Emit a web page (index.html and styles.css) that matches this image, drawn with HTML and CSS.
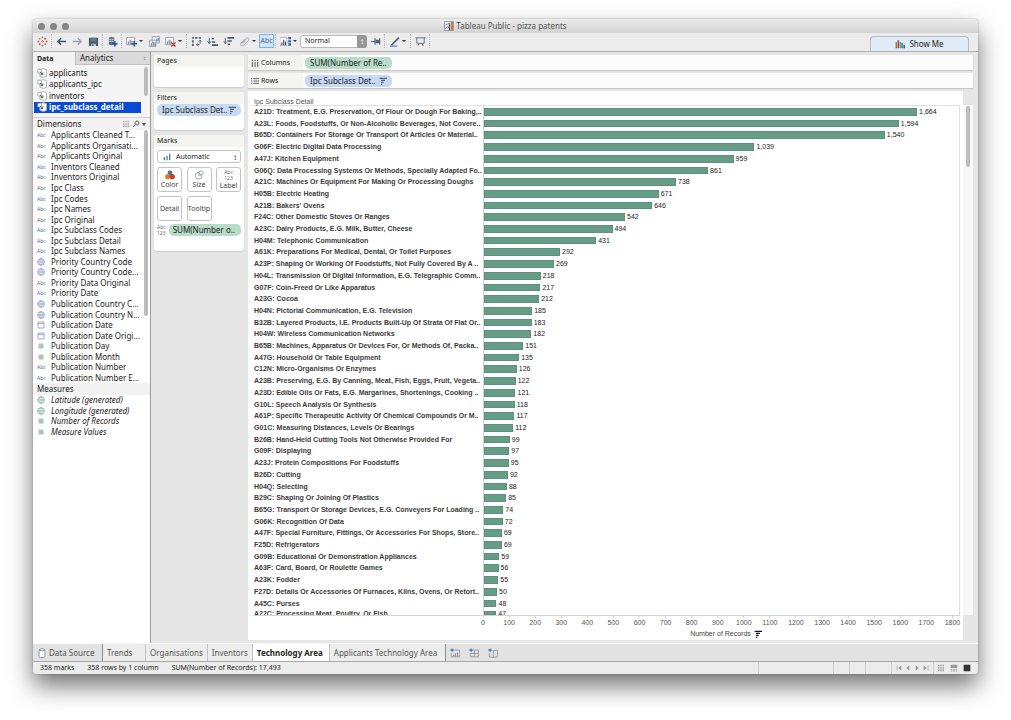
FILE: index.html
```html
<!DOCTYPE html>
<html lang="en">
<head>
    <meta charset="UTF-8">
    <meta name="viewport" content="width=device-width, initial-scale=1.0">
    <title>Tableau Public - pizza patents</title>
    <link rel="stylesheet" href="styles.css">
</head>
<body>
    <svg class="defs" aria-hidden="true">
        <symbol id="i-logo" viewBox="0 0 12 12"><path d="M6 4.500v3M4.500 6h3" stroke="#e8762d"/><path d="M6 .5v2M5 1.500h2M6 9.500v2M5 10.500h2" stroke="#6f8fb0"/><path d="M1.500 5v2M.5 6h2M10.500 5v2M9.500 6h2" stroke="#c9578a"/><path d="M3 2v2M2 3h2M9 8v2M8 9h2" stroke="#e8762d"/><path d="M9 2v2M8 3h2M3 8v2M2 9h2" stroke="#c4453e"/></symbol>
        <symbol id="i-back" viewBox="0 0 12 12"><path d="M11 6H2M5.500 2.500L2 6l3.500 3.500" fill="none" stroke="#44566c" stroke-width="1.600"/></symbol>
        <symbol id="i-fwd" viewBox="0 0 12 12"><path d="M1 6h9M6.500 2.500L10 6l-3.500 3.500" fill="none" stroke="#9aa3ac" stroke-width="1.500"/></symbol>
        <symbol id="i-save" viewBox="0 0 12 12"><path d="M1 2h10v9H1z" fill="#4a5b6e"/><path d="M3 2h6v4H3z" fill="#66788c"/><path d="M3.500 8.500h5V11h-5z" fill="#cfd5db"/><path d="M4.500 9H6v2H4.500z" fill="#4a5b6e"/></symbol>
        <symbol id="i-data" viewBox="0 0 12 12"><path d="M2 2q3-2 6 0v7q-3 2-6 0z" fill="#5b6b7c"/><path d="M2 3.500q3 1.500 6 0M2 5.500q3 1.500 6 0" fill="none" stroke="#e5e8eb" stroke-width=".8"/><path d="M8.500 5.500v6M5.500 8.500h6" stroke="#2f57a3" stroke-width="2"/></symbol>
        <symbol id="i-sheet" viewBox="0 0 12 12"><path d="M.5 1.500h9v8h-9z" fill="#f8f8f8" stroke="#9ba3ab"/><path d="M2.500 9V6M4.500 9V4M6.500 9V5" stroke="#55677b"/><path d="M9 5.500v6M6 8.500h6" stroke="#2f57a3" stroke-width="1.800"/></symbol>
        <symbol id="i-dup" viewBox="0 0 12 12"><path d="M3.500.5h8v7h-8zM.5 4.500h7v7h-7z" fill="#f6f6f6" stroke="#98a1aa"/><path d="M2.500 11V8M4.500 11V6.500M6.500 11V8M8.500 6V3M10 6V2" stroke="#55677b"/></symbol>
        <symbol id="i-clear" viewBox="0 0 12 12"><path d="M.5 1.500h9v8h-9z" fill="#f8f8f8" stroke="#9ba3ab"/><path d="M2.500 9V6M4.500 9V4M6.500 9V5" stroke="#55677b"/><path d="M7 7l4.500 4.500M11.500 7L7 11.500" stroke="#c3362b" stroke-width="1.400"/></symbol>
        <symbol id="i-swap" viewBox="0 0 12 12"><path d="M1 1h2v2H1zM1 4.500h2V7H1zM1 8.500h2V11H1zM4.500 1H7v2H4.500zM8.500 1H11v2H8.500z" fill="#52637a"/><path d="M10 5v3q0 1.500-4 1.500M8.500 6L10 4.500 11.500 6M7.500 8L6 9.500 7.500 11" fill="none" stroke="#52637a"/></symbol>
        <symbol id="i-asc" viewBox="0 0 12 12"><path d="M2.500 2v6M.8 6l1.700 2.300L4.200 6" fill="none" stroke="#44566c"/><path d="M5.500 3h2M5.500 6.500H9M5.500 10H12" stroke="#44566c" stroke-width="1.800"/></symbol>
        <symbol id="i-desc" viewBox="0 0 12 12"><path d="M2.500 2v6M.8 6l1.700 2.300L4.200 6" fill="none" stroke="#44566c"/><path d="M5 2h7M5 5.500h4.500M5 9h2.500" stroke="#44566c" stroke-width="1.800"/></symbol>
        <symbol id="i-clip" viewBox="0 0 12 12"><path d="M3 8l5-5.500q1.500-1 2.500 0t0 2.500L5 10.500q-2 1-3-.3t0-2.500L7 3M4 8.500l4-4" fill="none" stroke="#a3a8ad"/></symbol>
        <symbol id="i-cards" viewBox="0 0 12 12"><path d="M0 1.500h7.500v9H0z" fill="#fff" stroke="#9ba3ab" stroke-width=".8"/><path d="M2 10V7M4 10V4M6 10V6" stroke="#44566c" stroke-width="1.300"/><path d="M9 1h3v2.500H9zM9 4.500h3V7H9zM9 8h3v2.500H9z" fill="#3f62a0"/></symbol>
        <symbol id="i-pin" viewBox="0 0 12 12"><path d="M1 6h4M5.500 2.500v7M10.500 2.500v7" stroke="#52637a" stroke-width="1.300"/><path d="M6 4h4v4H6z" fill="#52637a"/></symbol>
        <symbol id="i-pen" viewBox="0 0 12 12"><path d="M10 1.500L3.500 8.500 2 10l2-.5 7-7z" fill="#44566c" stroke="#44566c" stroke-width=".8"/><path d="M1 11h8" stroke="#5a86bd" stroke-width="1.400"/></symbol>
        <symbol id="i-present" viewBox="0 0 12 12"><path d="M.5 2h11M2 2v6h8V2M4.500 8L3 11M7.500 8L9 11" fill="none" stroke="#5c6a79"/></symbol>
        <symbol id="i-showme" viewBox="0 0 12 12"><path d="M1.500 11V4" stroke="#8a6d2c" stroke-width="1.500"/><path d="M4 11V1.500" stroke="#b33434" stroke-width="1.800"/><path d="M6.500 11V3.500" stroke="#7b7bb0" stroke-width="1.500"/><path d="M8.500 11V4.500" stroke="#19a319" stroke-width="1.700"/><path d="M11 11V7" stroke="#2a3fd0" stroke-width="1.700"/></symbol>
        <symbol id="i-app" viewBox="0 0 12 12"><path d="M.5.5h11v11H.5z" fill="#e3e6ee" stroke="#8a93a5"/><path d="M2 9l2-2 2 1M2 4h2M5 3h2" stroke="#4f6b9e" fill="none"/><path d="M8 1h3v10H8z" fill="#c77c31"/><path d="M6.500 4v7" stroke="#454b58" stroke-width="1.500"/></symbol>
        <symbol id="i-src" viewBox="0 0 12 12"><path d="M3.500 2q4-2.500 8 0v8q-4 2.500-8 0z" fill="#fff" stroke="#a2a8ae"/><path d="M1 1.500h4.500V6H1z" fill="#fff" stroke="#8e959c" stroke-width=".8"/><path d="M3.500 4.500L7 8M7 5.500V8H4.500" fill="none" stroke="#4e565e" stroke-width="1.200"/></symbol>
        <symbol id="i-globe" viewBox="0 0 12 12"><circle cx="6" cy="6" r="5" fill="none" stroke="currentColor"/><path d="M1 6h10M6 1v10" stroke="currentColor" stroke-width=".8"/><ellipse cx="6" cy="6" rx="2.600" ry="5" fill="none" stroke="currentColor" stroke-width=".5"/></symbol>
        <symbol id="i-cal" viewBox="0 0 12 12"><path d="M1.500 1.500h9v9h-9zM1.500 4h9" fill="none" stroke="currentColor"/></symbol>
        <symbol id="i-hash" viewBox="0 0 12 12"><path d="M4.500 1.500v9M7.500 1.500v9M1.500 4.500h9M1.500 7.500h9" stroke="currentColor"/></symbol>
        <symbol id="i-sort" viewBox="0 0 12 12"><path d="M1 2h11M3 5h6M3 8h4M3 11h2" stroke="currentColor" stroke-width="1.700"/></symbol>
        <symbol id="i-grid" viewBox="0 0 12 12"><path d="M2.500 1v10M6 1v10M9.500 1v10" stroke="currentColor" stroke-width="2.200" stroke-dasharray="2.500 1.200"/></symbol>
        <symbol id="i-find" viewBox="0 0 12 12"><path d="M7.500 1.500a3 3 0 1 0 .01 0zM5 6.500L1.500 10.500" fill="none" stroke="#555" stroke-width="1.400"/></symbol>
        <symbol id="i-rows" viewBox="0 0 12 12"><path d="M0 2.500h2M0 6h2M0 9.500h2M3.500 2.500H12M3.500 6H12M3.500 9.500H12" stroke="#5c6878" stroke-width="1.500"/></symbol>
        <symbol id="i-cols" viewBox="0 0 12 12"><path d="M2 1v2M6 1v2M10 1v2M2 4v8M6 4v8M10 4v8" stroke="#777f88" stroke-width="2"/></symbol>
        <symbol id="i-bars" viewBox="0 0 12 12"><path d="M2 11V6M6 11V4M10 11V1" stroke="#4677a8" stroke-width="2"/></symbol>
        <symbol id="i-color" viewBox="0 0 12 12"><circle cx="6" cy="3.500" r="2.900" fill="#3f78ab"/><circle cx="3.300" cy="8" r="3.100" fill="#e8762d"/><circle cx="8.700" cy="8" r="3.100" fill="#c33d26"/></symbol>
        <symbol id="i-size" viewBox="0 0 12 12"><circle cx="5.500" cy="7" r="4" fill="none" stroke="#8b959f"/><circle cx="8.500" cy="3.500" r="2.500" fill="#fff" stroke="#8b959f"/><circle cx="6.500" cy="5.500" r="1.300" fill="none" stroke="#8b959f" stroke-width=".8"/></symbol>
        <symbol id="i-db" viewBox="0 0 12 12"><path d="M2.500 2.500q0-1.500 3.500-1.500t3.500 1.500v8q0 1-3.500 1t-3.500-1z" fill="#fff" stroke="#7d8896"/><path d="M2.500 2.500q3.500 2 7 0" fill="none" stroke="#7d8896"/></symbol>
        <symbol id="i-newsheet" viewBox="0 0 12 12"><path d="M5 2.500h6.500v8h-10V6" fill="none" stroke="#8a95a1"/><path d="M4.500 10V8M6.500 10V6.500M9 10V5.500" stroke="#667587"/><path d="M2.500.5v4M.5 2.500h4" stroke="#2f6fc0" stroke-width="1.300"/></symbol>
        <symbol id="i-newdash" viewBox="0 0 12 12"><path d="M5 2.500h6.500v8h-10V6M2 6.500h9M6.500 3v7" fill="none" stroke="#8a95a1"/><path d="M2.500.5v4M.5 2.500h4" stroke="#2f6fc0" stroke-width="1.300"/></symbol>
        <symbol id="i-newstory" viewBox="0 0 12 12"><path d="M5 2.500l1.500 1 5-1v8l-5 1-5-1V6M6.500 4v7" fill="none" stroke="#8a95a1"/><path d="M2.500.5v4M.5 2.500h4" stroke="#2f6fc0" stroke-width="1.300"/></symbol>
        <symbol id="i-prev" viewBox="0 0 12 12"><path d="M8 2v8L3.500 6z" fill="#999"/></symbol>
        <symbol id="i-next" viewBox="0 0 12 12"><path d="M4 2v8l4.500-4z" fill="#999"/></symbol>
        <symbol id="i-first" viewBox="0 0 12 12"><path d="M9.500 2v8L5 6z" fill="#999"/><path d="M3 2v8" stroke="#999"/></symbol>
        <symbol id="i-last" viewBox="0 0 12 12"><path d="M2.500 2v8L7 6z" fill="#999"/><path d="M9 2v8" stroke="#999"/></symbol>
        <symbol id="i-film" viewBox="0 0 12 12"><path d="M1 1h10v5H1z" fill="#999"/><path d="M1 8h10M1 10.500h10" stroke="#999" stroke-width="1.500" stroke-dasharray="2.500 1.200"/></symbol>
        <symbol id="i-full" viewBox="0 0 12 12"><path d="M1 1h10v10H1z" fill="#333"/></symbol>
    </svg>

    <div class="window">
        <header class="titlebar">
            <div class="lights"><i></i><i></i><i></i></div>
            <h1><svg class="icon"><use href="#i-app"/></svg>Tableau Public - pizza patents</h1>
            <div class="lights-space"></div>
        </header>

        <div class="toolbar">
            <button class="tool" aria-label="Start page"><svg class="icon"><use href="#i-logo"/></svg></button>
            <span class="sep"></span>
            <button class="tool" aria-label="Undo"><svg class="icon"><use href="#i-back"/></svg></button>
            <button class="tool" aria-label="Redo"><svg class="icon"><use href="#i-fwd"/></svg></button>
            <button class="tool" aria-label="Save"><svg class="icon"><use href="#i-save"/></svg></button>
            <span class="sep"></span>
            <button class="tool" aria-label="New data source"><svg class="icon"><use href="#i-data"/></svg></button>
            <span class="sep"></span>
            <button class="tool drop" aria-label="New worksheet"><svg class="icon"><use href="#i-sheet"/></svg></button>
            <button class="tool" aria-label="Duplicate"><svg class="icon"><use href="#i-dup"/></svg></button>
            <button class="tool drop" aria-label="Clear sheet"><svg class="icon"><use href="#i-clear"/></svg></button>
            <span class="sep"></span>
            <button class="tool" aria-label="Swap"><svg class="icon"><use href="#i-swap"/></svg></button>
            <button class="tool" aria-label="Sort ascending"><svg class="icon"><use href="#i-asc"/></svg></button>
            <button class="tool" aria-label="Sort descending"><svg class="icon"><use href="#i-desc"/></svg></button>
            <button class="tool drop" aria-label="Group"><svg class="icon"><use href="#i-clip"/></svg></button>
            <button class="tool abc-button">Abc</button>
            <span class="sep"></span>
            <button class="tool drop" aria-label="Show cards"><svg class="icon"><use href="#i-cards"/></svg></button>
            <span class="fit">
                <select aria-label="Fit"><option>Normal</option></select>
            </span>
            <button class="tool" aria-label="Fix axes"><svg class="icon"><use href="#i-pin"/></svg></button>
            <span class="sep"></span>
            <button class="tool drop" aria-label="Highlight"><svg class="icon"><use href="#i-pen"/></svg></button>
            <span class="sep"></span>
            <button class="tool" aria-label="Presentation mode"><svg class="icon"><use href="#i-present"/></svg></button>
            <span class="sep"></span>
            <button class="show-me"><svg class="icon"><use href="#i-showme"/></svg>Show Me</button>
        </div>

        <main class="workspace">
            <aside class="sidebar">
                <div class="side-tabs">
                    <button class="active">Data</button>
                    <button>Analytics <span class="updown">&#8597;</span></button>
                </div>
                <div class="sources">
                    <ul>
                        <li><svg class="icon"><use href="#i-src"/></svg>applicants</li>
                        <li><svg class="icon"><use href="#i-src"/></svg>applicants_ipc</li>
                        <li><svg class="icon"><use href="#i-src"/></svg>inventors</li>
                        <li class="selected"><svg class="icon"><use href="#i-src"/></svg>ipc_subclass_detail</li>
                    </ul>
                    <div class="scroll"></div>
                </div>
                <h2 class="side-head">Dimensions
                    <span class="head-icons">
                        <svg class="icon small"><use href="#i-grid"/></svg>
                        <svg class="icon small"><use href="#i-find"/></svg>
                        <i class="caret"></i>
                    </span>
                </h2>
                <div class="dimensions">
                    <ul class="fields" id="dimensions"></ul>
                    <div class="scroll"></div>
                </div>
                <h2 class="side-head">Measures</h2>
                <ul class="fields measures" id="measures"></ul>
            </aside>

            <section class="cards">
                <div class="card pages">
                    <h3>Pages</h3>
                </div>
                <div class="card filters">
                    <h3>Filters</h3>
                    <button class="pill blue">Ipc Subclass Det.. <svg class="icon small"><use href="#i-sort"/></svg></button>
                </div>
                <div class="card marks">
                    <h3>Marks</h3>
                    <div class="mark-type">
                        <svg class="icon small"><use href="#i-bars"/></svg>
                        <select aria-label="Mark type"><option>Automatic</option></select>
                    </div>
                    <div class="mark-grid">
                        <button><svg class="icon"><use href="#i-color"/></svg>Color</button>
                        <button><svg class="icon"><use href="#i-size"/></svg>Size</button>
                        <button><span class="abc123">Abc<br>123</span>Label</button>
                        <button>Detail</button>
                        <button>Tooltip</button>
                    </div>
                    <div class="mark-pill">
                        <span class="abc123">Abc<br>123</span>
                        <button class="pill green">SUM(Number o..</button>
                    </div>
                </div>
            </section>

            <section class="sheet">
                <div class="shelf">
                    <h3><svg class="icon small"><use href="#i-cols"/></svg>Columns</h3>
                    <button class="pill green">SUM(Number of Re..</button>
                </div>
                <div class="shelf">
                    <h3><svg class="icon small"><use href="#i-rows"/></svg>Rows</h3>
                    <button class="pill blue">Ipc Subclass Det.. <svg class="icon small"><use href="#i-sort"/></svg></button>
                </div>
                <div class="view-row">
                    <div class="view">
                        <div class="view-title">Ipc Subclass Detail</div>
                        <div class="chart" id="chart"></div>
                        <div class="axis" id="axis"></div>
                        <div class="axis-title">Number of Records <svg class="icon small"><use href="#i-sort"/></svg></div>
                    </div>
                    <div class="view-scroll"><div class="scroll"></div></div>
                </div>
            </section>
        </main>

        <nav class="sheet-tabs">
            <button class="source"><svg class="icon"><use href="#i-db"/></svg>Data Source</button>
            <button>Trends</button>
            <button>Organisations</button>
            <button>Inventors</button>
            <button class="active">Technology Area</button>
            <button class="last">Applicants Technology Area</button>
            <button class="new" aria-label="New worksheet"><svg class="icon"><use href="#i-newsheet"/></svg></button>
            <button class="new" aria-label="New dashboard"><svg class="icon"><use href="#i-newdash"/></svg></button>
            <button class="new" aria-label="New story"><svg class="icon"><use href="#i-newstory"/></svg></button>
        </nav>

        <footer class="status">
            <span>358 marks</span>
            <span>358 rows by 1 column</span>
            <span>SUM(Number of Records): 17,493</span>
            <div class="status-cells"><i></i><i></i><i></i><i></i></div>
            <div class="status-nav">
                <svg class="icon small"><use href="#i-first"/></svg>
                <svg class="icon small"><use href="#i-prev"/></svg>
                <svg class="icon small"><use href="#i-next"/></svg>
                <svg class="icon small"><use href="#i-last"/></svg>
            </div>
            <div class="status-view">
                <svg class="icon small"><use href="#i-grid"/></svg>
                <svg class="icon small"><use href="#i-film"/></svg>
                <svg class="icon small"><use href="#i-full"/></svg>
            </div>
        </footer>
    </div>

    <script>
        const dimensions = [
            ['abc', 'Applicants Cleaned T...'],
            ['abc', 'Applicants Organisati...'],
            ['abc', 'Applicants Original'],
            ['abc', 'Inventors Cleaned'],
            ['abc', 'Inventors Original'],
            ['abc', 'Ipc Class'],
            ['abc', 'Ipc Codes'],
            ['abc', 'Ipc Names'],
            ['abc', 'Ipc Original'],
            ['abc', 'Ipc Subclass Codes'],
            ['abc', 'Ipc Subclass Detail'],
            ['abc', 'Ipc Subclass Names'],
            ['globe', 'Priority Country Code'],
            ['globe', 'Priority Country Code...'],
            ['abc', 'Priority Data Original'],
            ['abc', 'Priority Date'],
            ['globe', 'Publication Country C...'],
            ['globe', 'Publication Country N...'],
            ['cal', 'Publication Date'],
            ['cal', 'Publication Date Origi...'],
            ['hash', 'Publication Day'],
            ['hash', 'Publication Month'],
            ['abc', 'Publication Number'],
            ['abc', 'Publication Number E...']
        ];

        const measures = [
            ['globe', 'Latitude (generated)'],
            ['globe', 'Longitude (generated)'],
            ['hash', 'Number of Records'],
            ['hash', 'Measure Values']
        ];

        const records = [
            ['A21D: Treatment, E.G. Preservation, Of Flour Or Dough For Baking,..', 1664],
            ['A23L: Foods, Foodstuffs, Or Non-Alcoholic Beverages, Not Covere..', 1594],
            ['B65D: Containers For Storage Or Transport Of Articles Or Material..', 1540],
            ['G06F: Electric Digital Data Processing', 1039],
            ['A47J: Kitchen Equipment', 959],
            ['G06Q: Data Processing Systems Or Methods, Specially Adapted Fo..', 861],
            ['A21C: Machines Or Equipment For Making Or Processing Doughs', 738],
            ['H05B: Electric Heating', 671],
            ["A21B: Bakers' Ovens", 646],
            ['F24C: Other Domestic Stoves Or Ranges', 542],
            ['A23C: Dairy Products, E.G. Milk, Butter, Cheese', 494],
            ['H04M: Telephonic Communication', 431],
            ['A61K: Preparations For Medical, Dental, Or Toilet Purposes', 292],
            ['A23P: Shaping Or Working Of Foodstuffs, Not Fully Covered By A ..', 269],
            ['H04L: Transmission Of Digital Information, E.G. Telegraphic Comm..', 218],
            ['G07F: Coin-Freed Or Like Apparatus', 217],
            ['A23G: Cocoa', 212],
            ['H04N: Pictorial Communication, E.G. Television', 185],
            ['B32B: Layered Products, I.E. Products Built-Up Of Strata Of Flat Or..', 183],
            ['H04W: Wireless Communication Networks', 182],
            ['B65B: Machines, Apparatus Or Devices For, Or Methods Of, Packa..', 151],
            ['A47G: Household Or Table Equipment', 135],
            ['C12N: Micro-Organisms Or Enzymes', 126],
            ['A23B: Preserving, E.G. By Canning, Meat, Fish, Eggs, Fruit, Vegeta..', 122],
            ['A23D: Edible Oils Or Fats, E.G. Margarines, Shortenings, Cooking ..', 121],
            ['G10L: Speech Analysis Or Synthesis', 118],
            ['A61P: Specific Therapeutic Activity Of Chemical Compounds Or M..', 117],
            ['G01C: Measuring Distances, Levels Or Bearings', 112],
            ['B26B: Hand-Held Cutting Tools Not Otherwise Provided For', 99],
            ['G09F: Displaying', 97],
            ['A23J: Protein Compositions For Foodstuffs', 95],
            ['B26D: Cutting', 92],
            ['H04Q: Selecting', 88],
            ['B29C: Shaping Or Joining Of Plastics', 85],
            ['B65G: Transport Or Storage Devices, E.G. Conveyers For Loading ..', 74],
            ['G06K: Recognition Of Data', 72],
            ['A47F: Special Furniture, Fittings, Or Accessories For Shops, Store..', 69],
            ['F25D: Refrigerators', 69],
            ['G09B: Educational Or Demonstration Appliances', 59],
            ['A63F: Card, Board, Or Roulette Games', 56],
            ['A23K: Fodder', 55],
            ['F27D: Details Or Accessories Of Furnaces, Kilns, Ovens, Or Retort..', 50],
            ['A45C: Purses', 48],
            ['A22C: Processing Meat, Poultry, Or Fish', 47]
        ];

        const axisMax = 1825;

        function renderFields(id, fields) {
            document.getElementById(id).innerHTML = fields.map(([type, name]) => {
                const icon = type === 'abc'
                    ? '<span class="abc">Abc</span>'
                    : `<svg class="icon small ${type}"><use href="#i-${type}"/></svg>`;
                return `<li>${icon}${name}</li>`;
            }).join('');
        }

        renderFields('dimensions', dimensions);
        renderFields('measures', measures);

        document.getElementById('chart').innerHTML = records.map(([name, count]) => `
            <div class="row">
                <span class="name">${name}</span>
                <span class="plot">
                    <span class="bar" style="width: ${(count / axisMax * 100).toFixed(2)}%"></span>
                    <span class="value">${count.toLocaleString('en-US')}</span>
                </span>
            </div>`).join('');

        let ticks = '';
        for (let n = 0; n <= 1800; n += 100) {
            ticks += `<span>${n}</span>`;
        }
        document.getElementById('axis').innerHTML = ticks;
    </script>
</body>
</html>
```
FILE: styles.css
```css
* {
    box-sizing: border-box;
}
body {
    margin: 0;
    height: 100vh;
    padding: 19px 33px 46px;
    background: #ffffff;
    font-family: "Lucida Grande", "Noto Sans", sans-serif;
    font-size: 8px;
    line-height: 10px;
    color: #222222;
}
h1, h2, h3, ul {
    margin: 0;
    padding: 0;
    font-size: 8px;
    font-weight: normal;
    list-style: none;
}
button, select {
    font: inherit;
    color: inherit;
    margin: 0;
    padding: 0;
    border: none;
    background: none;
    white-space: nowrap;
}
.defs {
    display: none;
}
.icon {
    width: 10px;
    height: 10px;
    flex: none;
}
.icon.small {
    width: 8px;
    height: 8px;
}
.caret {
    border: 2px solid transparent;
    border-top: 3px solid #555555;
    border-bottom: none;
}
.window {
    display: flex;
    flex-direction: column;
    height: 100%;
    border-radius: 4px;
    background: #e6e6e6;
    overflow: hidden;
    box-shadow: 0 12px 24px rgba(0, 0, 0, 0.55), 0 0 2px rgba(0, 0, 0, 0.3);
}

/* title bar */
.titlebar {
    display: flex;
    flex: none;
    justify-content: space-between;
    align-items: center;
    height: 14px;
    padding: 0 5px;
    background: linear-gradient(#ececec, #d2d2d2);
}
.titlebar h1 {
    display: flex;
    align-items: center;
    gap: 2px;
    color: #555555;
}
.lights, .lights-space {
    display: flex;
    gap: 5px;
    width: 42px;
}
.lights i {
    width: 7px;
    height: 7px;
    border-radius: 50%;
    background: #848484;
}

/* toolbar */
.toolbar {
    display: flex;
    flex: none;
    align-items: center;
    height: 19px;
    padding: 0 9px 2px 1px;
    background: #ececec;
    border-bottom: 1px solid #b0b0b0;
}
.tool {
    display: flex;
    align-items: center;
    justify-content: center;
    width: 16px;
    height: 15px;
}
.tool .icon {
    width: 11px;
    height: 11px;
}
.tool.drop {
    width: 23px;
    gap: 2px;
}
.tool.drop::after {
    content: "";
    border: 2px solid transparent;
    border-top: 2px solid #333333;
    border-bottom: none;
}
.abc-button {
    width: 15px;
    height: 14px;
    border: 1px solid #7fb2ec;
    background: #cfe3fa;
    color: #52637a;
    font-size: 7px;
}
.sep {
    height: 14px;
    margin: 0 1px;
    border-left: 1px dotted #bbbbbb;
}
.fit {
    display: flex;
    position: relative;
    width: 67px;
    height: 13px;
}
.fit select {
    appearance: none;
    width: 100%;
    padding-left: 4px;
    border: 1px solid #b9b9b9;
    border-radius: 3px;
    background: #ffffff;
    font-size: 7px;
}
.fit::after {
    content: "\2195";
    position: absolute;
    top: 0;
    right: 0;
    width: 10px;
    height: 13px;
    border-radius: 0 3px 3px 0;
    background: #979797;
    color: #ffffff;
    line-height: 12px;
    text-align: center;
    pointer-events: none;
}
.show-me {
    display: flex;
    align-items: center;
    justify-content: center;
    align-self: flex-end;
    gap: 4px;
    width: 99px;
    height: 15px;
    margin: 0 0 -2px auto;
    border: 1px solid #b4bcc4;
    border-bottom: none;
    border-radius: 4px 4px 0 0;
    background: #dfebf6;
}

/* workspace */
.workspace {
    display: flex;
    flex: 1;
    min-height: 0;
    border-bottom: 1px solid #f8f8f8;
}
.sidebar {
    display: flex;
    flex-direction: column;
    flex: none;
    width: 118px;
    border-right: 1px solid #9a9a9a;
    background: #ffffff;
}
.side-tabs {
    display: flex;
    height: 13px;
    flex: none;
    background: #f2f2f2;
}
.side-tabs button {
    display: flex;
    justify-content: space-between;
    align-items: center;
    flex: 1;
    padding: 0 4px;
    border-left: 1px solid #c0c0c0;
    border-bottom: 1px solid #c0c0c0;
    background: #dadada;
}
.side-tabs .active {
    flex: none;
    width: 42px;
    border: none;
    background: none;
    font-weight: bold;
    font-size: 7px;
}
.updown {
    color: #777777;
    font-size: 6px;
}
.sources {
    display: flex;
    flex: none;
    height: 53px;
    padding: 2px 2px 4px 1px;
    border-bottom: 1px solid #d0d0d0;
    background: #f5f5f5;
}
.sources ul {
    display: flex;
    flex-direction: column;
    width: 107px;
}
.sources li {
    display: flex;
    flex: 1;
    align-items: center;
    gap: 2px;
    padding-left: 3px;
}
.sources .selected {
    background: #0a4bd6;
    color: #ffffff;
    font-weight: bold;
}
.scroll {
    width: 4px;
    margin-left: auto;
    border-radius: 2px;
    background: #bcbcbc;
}
.sources .scroll {
    height: 29px;
}
.side-head {
    display: flex;
    align-items: center;
    justify-content: space-between;
    flex: none;
    height: 12px;
    padding: 0 4px;
    background: #f2f2f2;
}
.head-icons {
    display: flex;
    align-items: center;
    gap: 2px;
    color: #aaaaaa;
}
.dimensions {
    display: flex;
    flex: none;
    height: 253px;
    padding-right: 2px;
}
.dimensions .scroll {
    height: 186px;
}
.fields {
    display: flex;
    flex-direction: column;
}
.fields li {
    display: flex;
    flex: 1;
    align-items: center;
    gap: 6px;
    padding-left: 4px;
    white-space: nowrap;
}
.fields .icon, .fields .abc {
    width: 8px;
    color: #6c83b4;
}
.fields .abc {
    width: 10px;
    margin-right: -2px;
    color: #4d67a0;
    font-size: 5px;
}
.fields .hash, .measures .icon {
    color: #6a9a88;
}
.measures {
    height: 42px;
    font-style: italic;
}

/* cards */
.cards {
    display: flex;
    flex-direction: column;
    flex: none;
    gap: 5px;
    width: 97px;
    padding: 3px 4px 0 3px;
}
.card {
    border-radius: 3px;
    background: #ffffff;
    box-shadow: 0 1px 1px #cccccc;
}
.card h3, .shelf h3 {
    height: 12px;
    padding: 0 3px;
    border-radius: 3px 3px 0 0;
    background: #f4f4f0;
    font-size: 7px;
    line-height: 12px;
}
.pages {
    height: 32px;
}
.filters {
    height: 38px;
}
.marks {
    height: 116px;
}
.pill {
    display: flex;
    align-items: center;
    justify-content: space-between;
    height: 12px;
    padding: 0 5px;
    border-radius: 5px;
}
.pill.blue {
    background: #c6d8f3;
}
.pill.green {
    background: #b9dcc8;
}
.filters .pill {
    width: 84px;
    margin: 0 3px;
}
.pill .icon {
    color: #52637a;
}
.mark-type {
    display: flex;
    align-items: center;
    position: relative;
    height: 13px;
    margin: 3px 3px 4px;
    padding-left: 5px;
    border: 1px solid #c4c4c4;
    border-radius: 3px;
}
.mark-type select {
    appearance: none;
    flex: 1;
    padding-left: 5px;
    font-size: 7px;
}
.mark-type::after {
    content: "\2195";
    position: absolute;
    right: 3px;
    pointer-events: none;
}
.mark-grid {
    display: grid;
    grid-template-columns: repeat(3, 25px);
    grid-auto-rows: 25px;
    justify-content: space-between;
    gap: 4px;
    margin: 0 3px;
}
.mark-grid button {
    display: flex;
    flex-direction: column;
    align-items: center;
    justify-content: center;
    border: 1px solid #c4c4c4;
    border-radius: 3px;
    font-size: 7px;
    color: #444444;
}
.abc123 {
    font-size: 5px;
    line-height: 6px;
    color: #5f6b78;
}
.mark-pill {
    display: flex;
    align-items: center;
    gap: 3px;
    margin: 3px;
}
.mark-pill .pill {
    flex: 1;
    padding: 0 4px;
}

/* shelves and view */
.sheet {
    display: flex;
    flex-direction: column;
    flex: 1;
    gap: 3px;
    min-width: 0;
    padding: 3px 5px 3px 0;
}
.shelf {
    display: flex;
    align-items: center;
    flex: none;
    height: 15px;
    background: #fcfcfc;
    box-shadow: 0 1px 1px #c8c8c8;
}
.shelf h3 {
    display: flex;
    align-items: center;
    gap: 2px;
    width: 55px;
    height: 15px;
}
.shelf .pill {
    width: 87px;
    margin-left: 2px;
}
.view-row {
    display: flex;
    flex: 1;
    min-height: 0;
}
.view {
    display: flex;
    flex-direction: column;
    flex: 1;
    min-width: 0;
    padding: 6px 3px 2px 5px;
    background: #ffffff;
    font-family: "Liberation Sans", Arial, sans-serif;
    font-size: 7px;
    color: #555555;
}
.view-title {
    height: 9px;
    padding-left: 1px;
    border-bottom: 1px solid #e0e0e0;
}
.chart {
    display: flex;
    flex-direction: column;
    flex: 1;
    min-height: 0;
    overflow: hidden;
    border-right: 1px solid #e0e0e0;
    border-bottom: 1px solid #d4d4d4;
}
/* the last row is half cut off by the axis */
.row {
    display: flex;
    flex: 2;
    min-height: 0;
    overflow: hidden;
}
.row:last-child {
    flex: 1;
}
.name {
    width: 230px;
    padding-left: 1px;
    color: #3c3c3c;
    font-weight: bold;
    line-height: 12px;
    white-space: nowrap;
}
.plot {
    display: flex;
    flex: 1;
    border-left: 1px solid #d4d4d4;
}
.bar {
    margin: 2px 0;
    background: #679c87;
    border: 1px solid #5a927d;
}
.row:last-child .bar {
    margin-bottom: 0;
}
.value {
    padding-left: 2px;
    color: #222222;
    line-height: 12px;
}
.row:last-child .name, .row:last-child .value {
    line-height: 10px;
}
.axis {
    display: flex;
    margin-left: 217px;
    margin-right: 1px;
    height: 13px;
}
.axis span {
    display: flex;
    flex-direction: column;
    align-items: center;
    flex: none;
    width: calc((100% - 13px) / 1825 * 100);
}
.axis span::before {
    content: "";
    height: 2px;
    border-left: 1px solid #d4d4d4;
}
.axis-title {
    display: flex;
    align-items: center;
    justify-content: center;
    gap: 3px;
    height: 9px;
    margin-left: 239px;
    color: #444444;
}
.axis-title .icon {
    color: #111133;
}
.view-scroll {
    width: 10px;
    margin: 14px 0 25px;
    padding: 1px 3px 0 2px;
    background: #f8f8f8;
}
.view-scroll .scroll {
    height: 61px;
}

/* sheet tabs */
.sheet-tabs {
    display: flex;
    flex: none;
    height: 18px;
    background: #e2e2e2;
    border-bottom: 1px solid #a8a8a8;
}
.sheet-tabs button {
    min-width: 43px;
    padding: 0 4px;
    border-right: 1px solid #c4c4c4;
    background: #ededed;
    color: #555555;
    text-align: left;
}
.sheet-tabs .source {
    display: flex;
    align-items: center;
    gap: 2px;
    width: 70px;
    border-color: #8c8c8c;
    background: #e2e2e2;
}
.sheet-tabs .active {
    padding-right: 6px;
    background: #ffffff;
    color: #222222;
    font-weight: bold;
}
.sheet-tabs .last {
    padding-right: 8px;
    border-color: #8c8c8c;
}
.sheet-tabs .new {
    display: flex;
    align-items: center;
    min-width: 0;
    width: 19px;
    border: none;
    background: none;
}

/* status bar */
.status {
    display: flex;
    flex: none;
    align-items: center;
    gap: 13px;
    height: 12px;
    padding: 0 7px;
    background: #ececec;
    font-size: 7px;
}
.status-cells {
    display: flex;
    align-self: stretch;
    margin-left: auto;
}
.status-cells i {
    width: 16px;
    border-left: 1px solid #d0d0d0;
}
.status-cells i:first-child {
    width: 75px;
}
.status-cells i:last-child {
    width: 13px;
}
.status-nav, .status-view {
    display: flex;
    align-items: center;
    align-self: stretch;
    gap: 1px;
    padding-left: 3px;
    border-left: 1px solid #d0d0d0;
}
.status-view {
    gap: 5px;
    margin-left: -10px;
    color: #999999;
}
```
